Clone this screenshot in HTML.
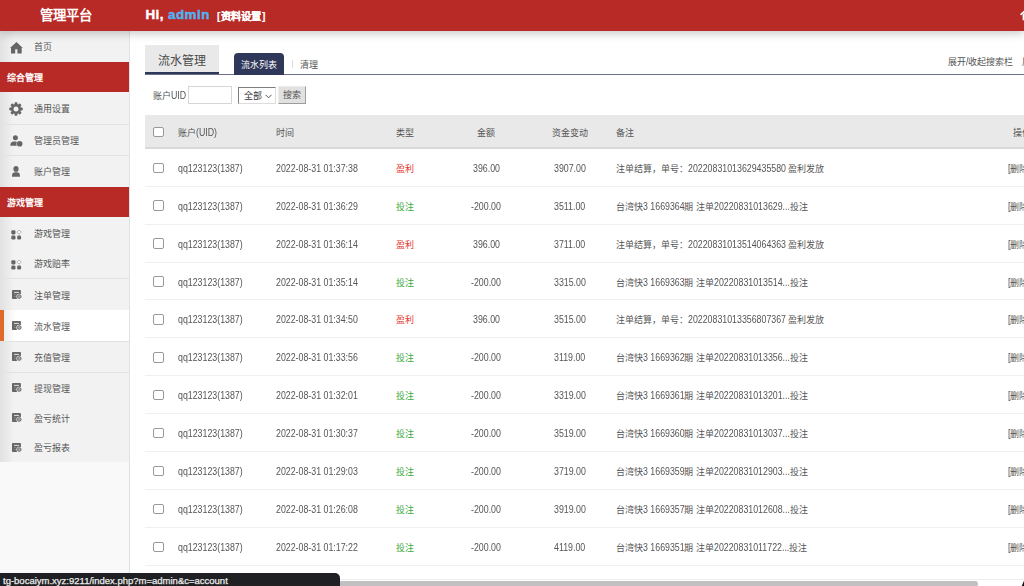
<!DOCTYPE html>
<html lang="zh-CN"><head><meta charset="utf-8">
<style>
*{margin:0;padding:0;box-sizing:border-box}
html,body{width:1024px;height:586px;overflow:hidden;background:#fff;font-family:"Liberation Sans",sans-serif;color:#555}
#hdr{position:absolute;left:0;top:0;width:1024px;height:31px;background:#b82a26;z-index:5;box-shadow:0 2px 9px rgba(0,0,0,.24)}
#hdr .logo{position:absolute;left:1px;width:130px;top:6.5px;text-align:center;color:#fff;font-weight:bold;font-size:13.3px;line-height:18px}
#hdr .hi{position:absolute;left:145.5px;top:5.5px;color:#fff;font-weight:bold;font-size:13.4px;letter-spacing:0.4px;line-height:18px;white-space:nowrap;-webkit-text-stroke:0.45px #fff}
#hdr .hi b{color:#4cb4f3;-webkit-text-stroke:0.45px #4cb4f3;letter-spacing:0.5px}
#hdr .hi span{font-size:10.3px;letter-spacing:0;margin-left:7px;vertical-align:-1px;-webkit-text-stroke:0.15px #fff}
#side{position:absolute;left:0;top:31px;width:130px;height:555px;background:#f9f9f9;border-right:1px solid #dce3e9}
#items{position:absolute;left:0;top:0;width:129px;height:431px;background:#f2f2f2}
#items:before{content:"";position:absolute;left:0;top:0;width:14px;height:100%;background:linear-gradient(to right,rgba(0,0,0,.07),rgba(0,0,0,0))}
.it{position:absolute;left:0;width:129px;font-size:9px;line-height:12px;color:#555}
.it .t{position:absolute;left:34px;white-space:nowrap}
.it svg{position:absolute}
.act{background:linear-gradient(to right,#e9e9e9,#fff 16px)}.act:after{content:"";position:absolute;left:0;top:0;width:3.5px;height:100%;background:#de6a2c}
.grp{position:absolute;left:0;width:129px;background:#b82a26;color:#fff;font-weight:bold;font-size:9px;line-height:12px}
.grp .t{position:absolute;left:7px;white-space:nowrap}
.sep{position:absolute;left:0;width:129px;height:1px;background:#e3e3e3}
#main{position:absolute;left:131px;top:31px;width:893px;height:555px;background:#fff}

.tx{position:absolute;white-space:nowrap;font-size:9px;line-height:12px;color:#555}
.n{display:inline-block;font-size:10.2px;transform:scaleX(0.865);transform-origin:0 0;white-space:pre;vertical-align:baseline}
#tabbox{position:absolute;left:14px;top:13.5px;width:74px;height:30.5px;background:#e9e9e9;border-bottom:3px solid #2f3859}
#tabbox div{position:absolute;left:0;width:74px;top:9.7px;text-align:center;font-size:12px;line-height:14px;color:#4a4a4a}
#tline{position:absolute;left:14px;top:43px;width:879px;height:1px;background:#697089}
#tab2{position:absolute;left:103px;top:22px;width:50px;height:22px;background:#2f3859;border-radius:4px 4px 0 0;color:#fff;font-size:9px;line-height:12px;text-align:center;padding-top:5.7px}
#vsep{position:absolute;left:161px;top:29px;width:1px;height:8px;background:#ddd}
.inp{position:absolute;border:1px solid #d6d6d6;background:#fff}
#sel{position:absolute;border:1px solid;border-color:#7d7d7d #dcdcdc #dcdcdc #7d7d7d;background:#fff;font-size:9px;line-height:12px;color:#333;padding:1.5px 0 0 4.5px}
#btn{position:absolute;background:#e1e1e1;border:1px solid;border-color:#ececec #9d9d9d #9d9d9d #ececec;font-size:9px;line-height:12px;color:#555;text-align:center;padding-top:2px}
#thead{position:absolute;left:14px;top:84px;width:879px;height:34px;background:#e9e9e9;border-bottom:2px solid #d9d9d9}
.cb{position:absolute;width:10.5px;height:10.5px;border:1px solid #999;border-radius:2px;background:#fff}
.rsep{position:absolute;left:14px;width:879px;height:1px;background:#f0f0f0}
.red{color:#e3372d}
.grn{color:#3da93d}
.cen{text-align:center}
#status{position:absolute;left:0;top:573px;width:340px;height:13px;background:#1f2023;border-radius:0 5px 0 0;z-index:10;color:#f2f2f2;font-size:9.5px;line-height:12px;padding-left:3px;padding-top:1.8px;white-space:nowrap;overflow:hidden;-webkit-text-stroke:0.25px #e8e8e8}
#sbar{position:absolute;left:0;top:547.5px;width:893px;height:7.5px;background:#fff;border-top:1px solid #eee}
#sthumb{position:absolute;left:0;top:549.5px;width:847px;height:6px;background:#c1c1c1;border-radius:3px}
</style></head>
<body>
<div id="hdr">
  <div class="logo">管理平台</div>
  <div class="hi">Hi, <b>admin</b><span>[&#8202;资料设置&#8202;]</span></div>
  <svg style="position:absolute;left:1019.5px;top:8.3px" width="14" height="13" viewBox="0 0 14 13"><path d="M1 6.3 L7 1 L13 6.3" fill="none" stroke="#fff" stroke-width="1.6" stroke-linecap="round"/><path d="M2.6 6.2 L7 2.6 L11.4 6.2 L11.4 12.3 L2.6 12.3 Z" fill="#fff"/></svg>
</div>
<div id="side"><div id="items"><div class="it" style="top:0px;height:31px"><div class="t" style="top:10px">首页</div><svg style="left:10px;top:10.600000000000001px" width="13" height="12" viewBox="0 0 13 12"><path d="M6.5 0.1 L0 6 L1 6 L1 11 Q1 11.6 1.6 11.6 L5.2 11.6 L5.2 7.2 L7.4 7.2 L7.4 11.6 L11 11.6 Q11.7 11.6 11.7 11 L11.7 6 L12.8 6 Z" fill="#666"/></svg></div><div class="grp" style="top:31px;height:30px"><div class="t" style="top:10.0px">综合管理</div></div><div class="it" style="top:61px;height:32px"><div class="t" style="top:11.400000000000006px">通用设置</div><svg style="left:9.2px;top:10.200000000000003px" width="14" height="14" viewBox="0 0 14 14"><g fill="#666"><circle cx="7" cy="7" r="5"/><rect x="5.55" y="0.3" width="2.9" height="13.4" rx="0.8" transform="rotate(0 7 7)"/><rect x="5.55" y="0.3" width="2.9" height="13.4" rx="0.8" transform="rotate(45 7 7)"/><rect x="5.55" y="0.3" width="2.9" height="13.4" rx="0.8" transform="rotate(90 7 7)"/><rect x="5.55" y="0.3" width="2.9" height="13.4" rx="0.8" transform="rotate(135 7 7)"/></g><circle cx="7" cy="7" r="2.5" fill="#f2f2f2"/></svg></div><div class="sep" style="top:93px"></div><div class="it" style="top:93px;height:31px"><div class="t" style="top:10.5px">管理员管理</div><svg style="left:10px;top:11px" width="13" height="12" viewBox="0 0 13 12"><g fill="#666"><circle cx="5.4" cy="2.8" r="2.5"/><path d="M0.3 10.8 C0.3 8 1.5 6.5 4 6.5 L5.6 6.5 C6.3 6.5 6.8 6.7 7.1 7 C6.4 7.8 6.2 9.5 6.9 10.8 Z"/><circle cx="9.7" cy="8.8" r="2.8"/></g></svg></div><div class="sep" style="top:124px"></div><div class="it" style="top:124px;height:32px"><div class="t" style="top:10.599999999999994px">账户管理</div><svg style="left:11px;top:11px" width="10" height="11" viewBox="0 0 10 11"><g fill="#666"><ellipse cx="5" cy="2.9" rx="2.6" ry="2.9"/><path d="M1 10.8 C0.7 7.6 2.2 6.2 4 6.2 L6 6.2 C7.8 6.2 9.3 7.6 9 10.8 Z"/></g></svg></div><div class="grp" style="top:156px;height:30px"><div class="t" style="top:10.0px">游戏管理</div></div><div class="it" style="top:186px;height:31px"><div class="t" style="top:11.400000000000006px">游戏管理</div><svg style="left:11px;top:13px" width="11" height="10" viewBox="0 0 11 10"><g fill="#666"><rect x="0.3" y="0.2" width="4.2" height="4.2" rx="1.3"/><rect x="0.3" y="5.6" width="4.2" height="4" rx="1.3"/><rect x="6.2" y="5.6" width="3.9" height="4" rx="1.3"/></g><rect x="6.55" y="0.55" width="3.1" height="3.1" rx="0.8" fill="#fafafa" stroke="#8a8a8a" stroke-width="0.65" transform="rotate(45 8.1 2.1)"/></svg></div><div class="it" style="top:217px;height:30px"><div class="t" style="top:10.399999999999977px">游戏赔率</div><svg style="left:11px;top:12px" width="11" height="10" viewBox="0 0 11 10"><g fill="#666"><rect x="0.3" y="0.2" width="4.2" height="4.2" rx="1.3"/><rect x="0.3" y="5.6" width="4.2" height="4" rx="1.3"/><rect x="6.2" y="5.6" width="3.9" height="4" rx="1.3"/></g><rect x="6.55" y="0.55" width="3.1" height="3.1" rx="0.8" fill="#fafafa" stroke="#8a8a8a" stroke-width="0.65" transform="rotate(45 8.1 2.1)"/></svg></div><div class="sep" style="top:247px"></div><div class="it" style="top:247px;height:32px"><div class="t" style="top:11.5px">注单管理</div><svg style="left:11.9px;top:12px" width="11" height="10" viewBox="0 0 11 10"><mask id="dm1"><rect width="11" height="10" fill="#fff"/><circle cx="7.25" cy="6.5" r="2.85" fill="#000"/></mask><rect x="0" y="0" width="8.9" height="9.1" rx="0.8" fill="#666" mask="url(#dm1)"/><circle cx="7.25" cy="6.5" r="1.85" fill="#a8a8a8" stroke="#666" stroke-width="0.9"/><rect x="2" y="1.9" width="5" height="0.9" fill="#eee"/><rect x="2" y="4.1" width="1.7" height="0.7" fill="#999"/><rect x="2" y="6.1" width="1.7" height="0.7" fill="#999"/></svg></div><div class="it act" style="top:279px;height:31px"><div class="t" style="top:10.600000000000023px">流水管理</div><svg style="left:11.9px;top:11px" width="11" height="10" viewBox="0 0 11 10"><mask id="dm2"><rect width="11" height="10" fill="#fff"/><circle cx="7.25" cy="6.5" r="2.85" fill="#000"/></mask><rect x="0" y="0" width="8.9" height="9.1" rx="0.8" fill="#666" mask="url(#dm2)"/><circle cx="7.25" cy="6.5" r="1.85" fill="#a8a8a8" stroke="#666" stroke-width="0.9"/><rect x="2" y="1.9" width="5" height="0.9" fill="#eee"/><rect x="2" y="4.1" width="1.7" height="0.7" fill="#999"/><rect x="2" y="6.1" width="1.7" height="0.7" fill="#999"/></svg></div><div class="sep" style="top:310px"></div><div class="it" style="top:310px;height:31px"><div class="t" style="top:10.899999999999977px">充值管理</div><svg style="left:11.9px;top:11px" width="11" height="10" viewBox="0 0 11 10"><mask id="dm3"><rect width="11" height="10" fill="#fff"/><circle cx="7.25" cy="6.5" r="2.85" fill="#000"/></mask><rect x="0" y="0" width="8.9" height="9.1" rx="0.8" fill="#666" mask="url(#dm3)"/><circle cx="7.25" cy="6.5" r="1.85" fill="#a8a8a8" stroke="#666" stroke-width="0.9"/><rect x="2" y="1.9" width="5" height="0.9" fill="#eee"/><rect x="2" y="4.1" width="1.7" height="0.7" fill="#999"/><rect x="2" y="6.1" width="1.7" height="0.7" fill="#999"/></svg></div><div class="sep" style="top:341px"></div><div class="it" style="top:341px;height:30px"><div class="t" style="top:11px">提现管理</div><svg style="left:11.9px;top:11px" width="11" height="10" viewBox="0 0 11 10"><mask id="dm4"><rect width="11" height="10" fill="#fff"/><circle cx="7.25" cy="6.5" r="2.85" fill="#000"/></mask><rect x="0" y="0" width="8.9" height="9.1" rx="0.8" fill="#666" mask="url(#dm4)"/><circle cx="7.25" cy="6.5" r="1.85" fill="#a8a8a8" stroke="#666" stroke-width="0.9"/><rect x="2" y="1.9" width="5" height="0.9" fill="#eee"/><rect x="2" y="4.1" width="1.7" height="0.7" fill="#999"/><rect x="2" y="6.1" width="1.7" height="0.7" fill="#999"/></svg></div><div class="it" style="top:371px;height:30px"><div class="t" style="top:11px">盈亏统计</div><svg style="left:11.9px;top:11px" width="11" height="10" viewBox="0 0 11 10"><mask id="dm5"><rect width="11" height="10" fill="#fff"/><circle cx="7.25" cy="6.5" r="2.85" fill="#000"/></mask><rect x="0" y="0" width="8.9" height="9.1" rx="0.8" fill="#666" mask="url(#dm5)"/><circle cx="7.25" cy="6.5" r="1.85" fill="#a8a8a8" stroke="#666" stroke-width="0.9"/><rect x="2" y="1.9" width="5" height="0.9" fill="#eee"/><rect x="2" y="4.1" width="1.7" height="0.7" fill="#999"/><rect x="2" y="6.1" width="1.7" height="0.7" fill="#999"/></svg></div><div class="it" style="top:401px;height:30px"><div class="t" style="top:10.399999999999977px">盈亏报表</div><svg style="left:11.9px;top:11px" width="11" height="10" viewBox="0 0 11 10"><mask id="dm6"><rect width="11" height="10" fill="#fff"/><circle cx="7.25" cy="6.5" r="2.85" fill="#000"/></mask><rect x="0" y="0" width="8.9" height="9.1" rx="0.8" fill="#666" mask="url(#dm6)"/><circle cx="7.25" cy="6.5" r="1.85" fill="#a8a8a8" stroke="#666" stroke-width="0.9"/><rect x="2" y="1.9" width="5" height="0.9" fill="#eee"/><rect x="2" y="4.1" width="1.7" height="0.7" fill="#999"/><rect x="2" y="6.1" width="1.7" height="0.7" fill="#999"/></svg></div></div></div>
<div id="main"><div id="tabbox"><div>流水管理</div></div><div id="tline"></div><div id="tab2">流水列表</div><div id="vsep"></div><div class="tx " style="left:169px;top:27.90px;">清理</div><div class="tx " style="left:817px;top:24.70px;">展开<span class="n" style="width:2.45px">/</span>收起搜索栏</div><div class="tx " style="left:891px;top:24.70px;">展开</div><div class="tx " style="left:21.5px;top:58.50px;">账户<span class="n" style="width:15.19px">UID</span></div><div class="inp" style="left:57px;top:55px;width:44px;height:18px"></div><div id="sel" style="left:107px;top:56px;width:37.5px;height:17px">全部<svg style="position:absolute;left:26px;top:6px" width="7" height="5" viewBox="0 0 7 5"><path d="M0.5 0.8 L3.5 3.8 L6.5 0.8" fill="none" stroke="#444" stroke-width="0.9"/></svg></div><div id="btn" style="left:147px;top:55px;width:28px;height:18px">搜索</div><div id="thead"></div><div class="cb" style="left:22px;top:95.75px"></div><div class="tx " style="left:46.5px;top:95.50px;">账户<span class="n" style="width:21.07px">(UID)</span></div><div class="tx " style="left:144.5px;top:95.50px;">时间</div><div class="tx " style="left:265px;top:95.50px;">类型</div><div class="tx cen" style="left:315px;top:95.50px;width:80px">金额</div><div class="tx cen" style="left:399px;top:95.50px;width:80px">资金变动</div><div class="tx " style="left:484.5px;top:95.50px;">备注</div><div class="tx " style="left:882px;top:95.50px;">操作</div><div class="cb" style="left:22px;top:131.59px"></div><div class="tx " style="left:46.5px;top:131.84px;"><span class="n" style="width:64.75px">qq123123(1387)</span></div><div class="tx " style="left:144.5px;top:131.84px;"><span class="n" style="width:81.92px">2022-08-31 01:37:38</span></div><div class="tx red" style="left:265px;top:131.84px;">盈利</div><div class="tx cen" style="left:315px;top:131.84px;width:80px"><span class="n" style="width:26.98px">396.00</span></div><div class="tx cen" style="left:399px;top:131.84px;width:80px"><span class="n" style="width:31.89px">3907.00</span></div><div class="tx " style="left:484.5px;top:131.84px;">注单结算，单号：<span class="n" style="width:100.58px">20220831013629435580 </span>盈利发放</div><div class="tx " style="left:877px;top:131.84px;"><span class="n" style="width:2.45px">[</span>删除<span class="n" style="width:2.45px">]</span></div><div class="rsep" style="top:154.79px"></div><div class="cb" style="left:22px;top:169.49px"></div><div class="tx " style="left:46.5px;top:169.74px;"><span class="n" style="width:64.75px">qq123123(1387)</span></div><div class="tx " style="left:144.5px;top:169.74px;"><span class="n" style="width:81.92px">2022-08-31 01:36:29</span></div><div class="tx grn" style="left:265px;top:169.74px;">投注</div><div class="tx cen" style="left:315px;top:169.74px;width:80px"><span class="n" style="width:29.92px">-200.00</span></div><div class="tx cen" style="left:399px;top:169.74px;width:80px"><span class="n" style="width:31.23px">3511.00</span></div><div class="tx " style="left:484.5px;top:169.74px;">台湾快<span class="n" style="width:41.70px">3 1669364</span>期<span class="n" style="width:2.45px"> </span>注单<span class="n" style="width:76.04px">20220831013629...</span>投注</div><div class="tx " style="left:877px;top:169.74px;"><span class="n" style="width:2.45px">[</span>删除<span class="n" style="width:2.45px">]</span></div><div class="rsep" style="top:192.68px"></div><div class="cb" style="left:22px;top:207.38px"></div><div class="tx " style="left:46.5px;top:207.62px;"><span class="n" style="width:64.75px">qq123123(1387)</span></div><div class="tx " style="left:144.5px;top:207.62px;"><span class="n" style="width:81.92px">2022-08-31 01:36:14</span></div><div class="tx red" style="left:265px;top:207.62px;">盈利</div><div class="tx cen" style="left:315px;top:207.62px;width:80px"><span class="n" style="width:26.98px">396.00</span></div><div class="tx cen" style="left:399px;top:207.62px;width:80px"><span class="n" style="width:31.23px">3711.00</span></div><div class="tx " style="left:484.5px;top:207.62px;">注单结算，单号：<span class="n" style="width:100.58px">20220831013514064363 </span>盈利发放</div><div class="tx " style="left:877px;top:207.62px;"><span class="n" style="width:2.45px">[</span>删除<span class="n" style="width:2.45px">]</span></div><div class="rsep" style="top:230.57px"></div><div class="cb" style="left:22px;top:245.26px"></div><div class="tx " style="left:46.5px;top:245.51px;"><span class="n" style="width:64.75px">qq123123(1387)</span></div><div class="tx " style="left:144.5px;top:245.51px;"><span class="n" style="width:81.92px">2022-08-31 01:35:14</span></div><div class="tx grn" style="left:265px;top:245.51px;">投注</div><div class="tx cen" style="left:315px;top:245.51px;width:80px"><span class="n" style="width:29.92px">-200.00</span></div><div class="tx cen" style="left:399px;top:245.51px;width:80px"><span class="n" style="width:31.89px">3315.00</span></div><div class="tx " style="left:484.5px;top:245.51px;">台湾快<span class="n" style="width:41.70px">3 1669363</span>期<span class="n" style="width:2.45px"> </span>注单<span class="n" style="width:76.04px">20220831013514...</span>投注</div><div class="tx " style="left:877px;top:245.51px;"><span class="n" style="width:2.45px">[</span>删除<span class="n" style="width:2.45px">]</span></div><div class="rsep" style="top:268.46px"></div><div class="cb" style="left:22px;top:283.16px"></div><div class="tx " style="left:46.5px;top:283.41px;"><span class="n" style="width:64.75px">qq123123(1387)</span></div><div class="tx " style="left:144.5px;top:283.41px;"><span class="n" style="width:81.92px">2022-08-31 01:34:50</span></div><div class="tx red" style="left:265px;top:283.41px;">盈利</div><div class="tx cen" style="left:315px;top:283.41px;width:80px"><span class="n" style="width:26.98px">396.00</span></div><div class="tx cen" style="left:399px;top:283.41px;width:80px"><span class="n" style="width:31.89px">3515.00</span></div><div class="tx " style="left:484.5px;top:283.41px;">注单结算，单号：<span class="n" style="width:100.58px">20220831013356807367 </span>盈利发放</div><div class="tx " style="left:877px;top:283.41px;"><span class="n" style="width:2.45px">[</span>删除<span class="n" style="width:2.45px">]</span></div><div class="rsep" style="top:306.35px"></div><div class="cb" style="left:22px;top:321.05px"></div><div class="tx " style="left:46.5px;top:321.30px;"><span class="n" style="width:64.75px">qq123123(1387)</span></div><div class="tx " style="left:144.5px;top:321.30px;"><span class="n" style="width:81.92px">2022-08-31 01:33:56</span></div><div class="tx grn" style="left:265px;top:321.30px;">投注</div><div class="tx cen" style="left:315px;top:321.30px;width:80px"><span class="n" style="width:29.92px">-200.00</span></div><div class="tx cen" style="left:399px;top:321.30px;width:80px"><span class="n" style="width:31.23px">3119.00</span></div><div class="tx " style="left:484.5px;top:321.30px;">台湾快<span class="n" style="width:41.70px">3 1669362</span>期<span class="n" style="width:2.45px"> </span>注单<span class="n" style="width:76.04px">20220831013356...</span>投注</div><div class="tx " style="left:877px;top:321.30px;"><span class="n" style="width:2.45px">[</span>删除<span class="n" style="width:2.45px">]</span></div><div class="rsep" style="top:344.24px"></div><div class="cb" style="left:22px;top:358.94px"></div><div class="tx " style="left:46.5px;top:359.19px;"><span class="n" style="width:64.75px">qq123123(1387)</span></div><div class="tx " style="left:144.5px;top:359.19px;"><span class="n" style="width:81.92px">2022-08-31 01:32:01</span></div><div class="tx grn" style="left:265px;top:359.19px;">投注</div><div class="tx cen" style="left:315px;top:359.19px;width:80px"><span class="n" style="width:29.92px">-200.00</span></div><div class="tx cen" style="left:399px;top:359.19px;width:80px"><span class="n" style="width:31.89px">3319.00</span></div><div class="tx " style="left:484.5px;top:359.19px;">台湾快<span class="n" style="width:41.70px">3 1669361</span>期<span class="n" style="width:2.45px"> </span>注单<span class="n" style="width:76.04px">20220831013201...</span>投注</div><div class="tx " style="left:877px;top:359.19px;"><span class="n" style="width:2.45px">[</span>删除<span class="n" style="width:2.45px">]</span></div><div class="rsep" style="top:382.13px"></div><div class="cb" style="left:22px;top:396.82px"></div><div class="tx " style="left:46.5px;top:397.07px;"><span class="n" style="width:64.75px">qq123123(1387)</span></div><div class="tx " style="left:144.5px;top:397.07px;"><span class="n" style="width:81.92px">2022-08-31 01:30:37</span></div><div class="tx grn" style="left:265px;top:397.07px;">投注</div><div class="tx cen" style="left:315px;top:397.07px;width:80px"><span class="n" style="width:29.92px">-200.00</span></div><div class="tx cen" style="left:399px;top:397.07px;width:80px"><span class="n" style="width:31.89px">3519.00</span></div><div class="tx " style="left:484.5px;top:397.07px;">台湾快<span class="n" style="width:41.70px">3 1669360</span>期<span class="n" style="width:2.45px"> </span>注单<span class="n" style="width:76.04px">20220831013037...</span>投注</div><div class="tx " style="left:877px;top:397.07px;"><span class="n" style="width:2.45px">[</span>删除<span class="n" style="width:2.45px">]</span></div><div class="rsep" style="top:420.02px"></div><div class="cb" style="left:22px;top:434.71px"></div><div class="tx " style="left:46.5px;top:434.96px;"><span class="n" style="width:64.75px">qq123123(1387)</span></div><div class="tx " style="left:144.5px;top:434.96px;"><span class="n" style="width:81.92px">2022-08-31 01:29:03</span></div><div class="tx grn" style="left:265px;top:434.96px;">投注</div><div class="tx cen" style="left:315px;top:434.96px;width:80px"><span class="n" style="width:29.92px">-200.00</span></div><div class="tx cen" style="left:399px;top:434.96px;width:80px"><span class="n" style="width:31.89px">3719.00</span></div><div class="tx " style="left:484.5px;top:434.96px;">台湾快<span class="n" style="width:41.70px">3 1669359</span>期<span class="n" style="width:2.45px"> </span>注单<span class="n" style="width:76.04px">20220831012903...</span>投注</div><div class="tx " style="left:877px;top:434.96px;"><span class="n" style="width:2.45px">[</span>删除<span class="n" style="width:2.45px">]</span></div><div class="rsep" style="top:457.91px"></div><div class="cb" style="left:22px;top:472.60px"></div><div class="tx " style="left:46.5px;top:472.85px;"><span class="n" style="width:64.75px">qq123123(1387)</span></div><div class="tx " style="left:144.5px;top:472.85px;"><span class="n" style="width:81.92px">2022-08-31 01:26:08</span></div><div class="tx grn" style="left:265px;top:472.85px;">投注</div><div class="tx cen" style="left:315px;top:472.85px;width:80px"><span class="n" style="width:29.92px">-200.00</span></div><div class="tx cen" style="left:399px;top:472.85px;width:80px"><span class="n" style="width:31.89px">3919.00</span></div><div class="tx " style="left:484.5px;top:472.85px;">台湾快<span class="n" style="width:41.70px">3 1669357</span>期<span class="n" style="width:2.45px"> </span>注单<span class="n" style="width:76.04px">20220831012608...</span>投注</div><div class="tx " style="left:877px;top:472.85px;"><span class="n" style="width:2.45px">[</span>删除<span class="n" style="width:2.45px">]</span></div><div class="rsep" style="top:495.80px"></div><div class="cb" style="left:22px;top:510.50px"></div><div class="tx " style="left:46.5px;top:510.75px;"><span class="n" style="width:64.75px">qq123123(1387)</span></div><div class="tx " style="left:144.5px;top:510.75px;"><span class="n" style="width:81.92px">2022-08-31 01:17:22</span></div><div class="tx grn" style="left:265px;top:510.75px;">投注</div><div class="tx cen" style="left:315px;top:510.75px;width:80px"><span class="n" style="width:29.92px">-200.00</span></div><div class="tx cen" style="left:399px;top:510.75px;width:80px"><span class="n" style="width:31.23px">4119.00</span></div><div class="tx " style="left:484.5px;top:510.75px;">台湾快<span class="n" style="width:41.70px">3 1669351</span>期<span class="n" style="width:2.45px"> </span>注单<span class="n" style="width:75.39px">20220831011722...</span>投注</div><div class="tx " style="left:877px;top:510.75px;"><span class="n" style="width:2.45px">[</span>删除<span class="n" style="width:2.45px">]</span></div><div class="rsep" style="top:533.69px"></div><div id="sbar"></div><div id="sthumb"></div></div>
<svg style="position:absolute;left:1021px;top:579px;z-index:12" width="4" height="7" viewBox="0 0 4 7"><path d="M3.5 0.5 L0.8 7 L4 7 L4 0 Z" fill="#111"/></svg><div id="status">tg-bocaiym.xyz:9211/index.php?m=admin&amp;c=account</div>
</body></html>
